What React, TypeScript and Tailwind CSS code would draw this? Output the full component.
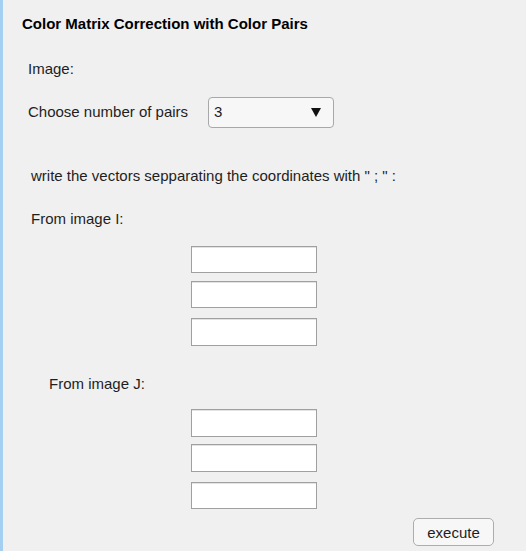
import React from 'react'

const Field = ({ className = '' }: { className?: string }) => (
    <input
        type="text"
        className={`block w-[126px] ml-[188px] bg-white border border-[#a0a0a0] shadow-[inset_0_1px_0_#e3e3e3] outline-none ${className}`}
    />
)

const App = () => {
    return (
        <div className="w-[526px] h-[551px] bg-[#f0f0f0] border-l-[3px] border-[#a5cff0] overflow-hidden text-[15px] text-[#1e1e1e] font-['Liberation_Sans',Arial,sans-serif]">
            <div className="pt-[14px] pl-[19px] h-[33px] leading-[20px] text-[15px] font-bold text-black">
                Color Matrix Correction with Color Pairs
            </div>

            <div className="mt-[26px] pl-[25px] h-[20px] leading-[20px]">Image:</div>

            <div className="mt-[18px] pl-[25px] h-[31px] flex items-center">
                <span className="w-[180px]">Choose number of pairs</span>
                <div className="w-[126px] h-[31px] border border-[#a8a8a8] rounded-[4px] bg-[#f7f7f7] flex items-center justify-between pl-[5px] pr-[12px]">
                    <span>3</span>
                    <svg width="10" height="9" viewBox="0 0 10 9">
                        <path d="M0 0 L10 0 L5 9 Z" fill="#111" />
                    </svg>
                </div>
            </div>

            <div className="mt-[38px] pl-[28px] h-[20px] leading-[20px]">
                write the vectors sepparating the coordinates with " ; " :
            </div>

            <div className="mt-[23px] pl-[28px] h-[20px] leading-[20px]">From image I:</div>

            <Field className="mt-[17px] h-[27px]" />
            <Field className="mt-[8px] h-[27px]" />
            <Field className="mt-[10px] h-[28px]" />

            <div className="mt-[28px] pl-[46px] h-[20px] leading-[20px]">From image J:</div>

            <Field className="mt-[15px] h-[28px]" />
            <Field className="mt-[7px] h-[28px]" />
            <Field className="mt-[10px] h-[27px]" />

            <button className="block mt-[9px] ml-[410px] w-[81px] h-[28px] border border-[#adadad] rounded-[5px] bg-[#f7f7f7] text-[15px] leading-none">
                execute
            </button>
        </div>
    )
}

export default App
